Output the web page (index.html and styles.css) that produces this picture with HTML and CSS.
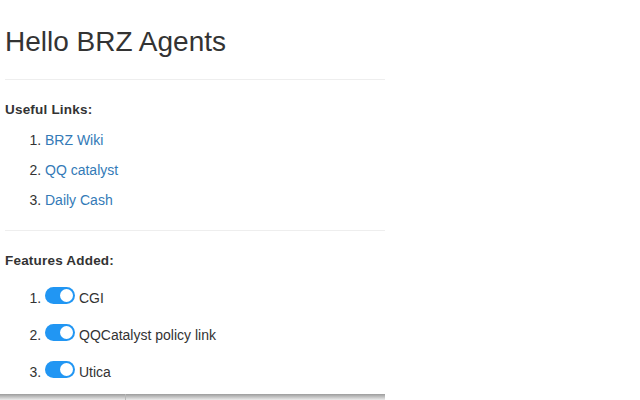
FILE: index.html
```html
<!DOCTYPE html>
<html>
<head>
<meta charset="utf-8">
<link rel="stylesheet" href="styles.css">
</head>
<body>
<div class="popup">
  <h1 class="title">Hello BRZ Agents</h1>
  <hr class="rule rule-top">
  <p class="label">Useful Links:</p>
  <ol class="links">
    <li><a href="#">BRZ Wiki</a></li>
    <li><a href="#">QQ catalyst</a></li>
    <li><a href="#">Daily Cash</a></li>
  </ol>
  <hr class="rule rule-mid">
  <p class="label">Features Added:</p>
  <ol class="features">
    <li><span class="toggle"><span class="knob"></span></span>CGI</li>
    <li><span class="toggle"><span class="knob"></span></span>QQCatalyst policy link</li>
    <li><span class="toggle"><span class="knob"></span></span>Utica</li>
  </ol>
  <div class="footer-edge">
    <div class="edge-left"></div>
    <div class="edge-right"></div>
  </div>
</div>
</body>
</html>
```
FILE: styles.css
```css
html, body {
  margin: 0;
  padding: 0;
  background: #fff;
  overflow: hidden;
}
body {
  font-family: "Liberation Sans", Arial, sans-serif;
  color: #333;
  font-size: 14px;
}
.popup {
  width: 380px;
  padding-left: 5px;
}
.title {
  margin: 26px 0 0;
  font-size: 28px;
  line-height: 32px;
  font-weight: 400;
  color: #333;
}
.rule {
  margin: 0;
  border: 0;
  border-top: 1px solid #eee;
  height: 0;
}
.rule-top {
  margin-top: 21px;
}
.rule-mid {
  margin-top: 15px;
}
.label {
  margin: 20px 0 0;
  font-size: 13.5px;
  line-height: 20px;
  font-weight: 700;
  letter-spacing: 0.2px;
}
.links, .features {
  margin: 0;
  padding-left: 40px;
}
.links {
  margin-top: 5px;
}
.links li {
  line-height: 30px;
}
.links a {
  color: #337ab7;
  text-decoration: none;
}
.features {
  margin-top: 9px;
}
.features li {
  line-height: 37px;
}
.toggle {
  display: inline-block;
  position: relative;
  width: 30px;
  height: 17px;
  border-radius: 9px;
  background: #2196f3;
  vertical-align: -1px;
  margin-right: 4px;
}
.knob {
  position: absolute;
  top: 2px;
  left: 15px;
  width: 13px;
  height: 13px;
  border-radius: 50%;
  background: #fff;
}
.footer-edge {
  display: flex;
  margin: 3px 0 0 -5px;
  width: 385px;
  height: 8px;
}
.edge-left {
  width: 125px;
  background: linear-gradient(#9c9c9c, #e6e6e6 70%, #f2f2f2);
}
.edge-right {
  flex: 1;
  border-left: 1px solid #b8b8b8;
  background: linear-gradient(#9c9c9c, #e6e6e6 70%, #f2f2f2);
}
```
